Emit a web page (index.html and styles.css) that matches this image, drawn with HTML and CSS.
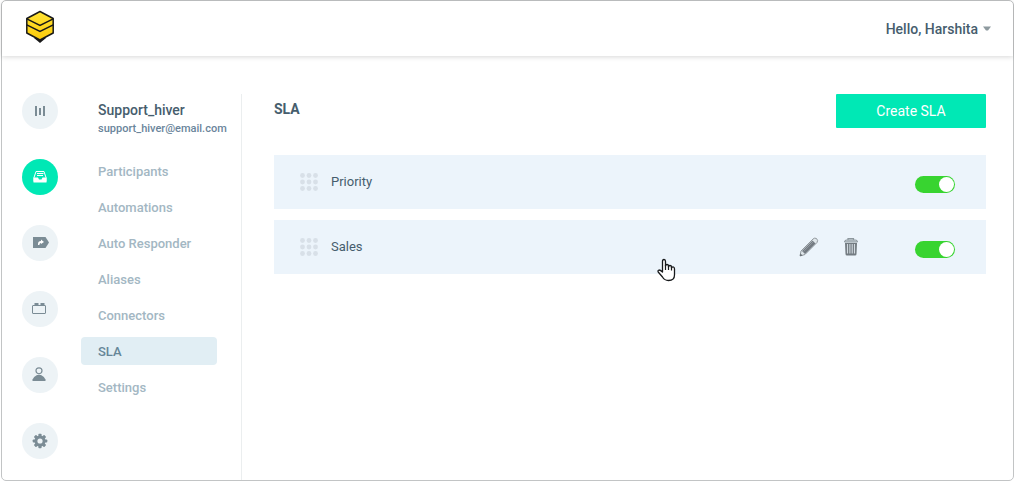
FILE: index.html
```html
<!DOCTYPE html>
<html lang="en">
<head>
<meta charset="utf-8">
<meta name="viewport" content="width=device-width, initial-scale=1">
<title>SLA</title>
<link rel="stylesheet" href="styles.css">
</head>
<body>
<div class="window">
  <header class="topbar">
    <a class="brand" href="#" aria-label="Home">
      <svg width="30" height="34" viewBox="0 0 30 34">
        <defs><linearGradient id="honey" x1="0" y1="0" x2="0" y2="1"><stop offset="0" stop-color="#ffe335"/><stop offset="1" stop-color="#fccb0a"/></linearGradient></defs>
        <path d="M9 28 L21 28 L15 33 Z" fill="#191919"/>
        <path d="M15 1.5 L28.2 8.5 V23 L15 30 L1.8 23 V8.5 Z" fill="url(#honey)" stroke="#191919" stroke-width="1.5" stroke-linejoin="round"/>
        <path d="M1.8 8.8 L15 15.5 L28.2 8.8 M1.8 14.8 L15 21.5 L28.2 14.8" fill="none" stroke="#191919" stroke-width="1.5"/>
      </svg>
    </a>
    <button class="account" type="button">Hello, Harshita
      <svg width="8" height="5" viewBox="0 0 8 5"><path d="M0 0.5 H8 L5 4.5 H3 Z" fill="#8e9a9f"/></svg>
    </button>
  </header>
  <div class="body">
    <nav class="rail" aria-label="Sections">
      <a class="rail-link" href="#" aria-label="Reports">
        <svg width="16" height="16" viewBox="0 0 16 16" fill="#7b8c95"><path d="M3 3h2v10H3zM7 5h2v7H7zM11 3h2v10h-2z"/></svg>
      </a>
      <a class="rail-link rail-link-active" href="#" aria-label="Shared inboxes">
        <svg width="16" height="16" viewBox="0 0 16 16" fill="none"><path d="M4 2.500H12L14 8.500V12.500H2V8.500Z" stroke="#fff"/><path d="M1.500 8.500H6L7 10.500H9.500L10.500 8.500H14.500V13.500H1.500Z" fill="#fff"/><path d="M5 4.500H11.500M5 6.500H11" stroke="#fff"/></svg>
      </a>
      <a class="rail-link" href="#" aria-label="Tags">
        <svg width="18" height="16" viewBox="0 0 18 16"><path d="M2 2H14.500L18 7.500L14.500 13H2Z" fill="#7b8c95"/><path d="M7 10V9Q7 6 10 6V4.500L13 7L10 9V8Q8.500 8 8.300 10Z" fill="#fff"/></svg>
      </a>
      <a class="rail-link" href="#" aria-label="Integrations">
        <svg width="16" height="16" viewBox="0 0 16 16"><path d="M2.500 2h4v2h-4zM8.500 2h4v2h-4z" fill="#7b8c95"/><rect x=".5" y="4.500" width="13" height="8" rx=".5" fill="none" stroke="#7b8c95"/></svg>
      </a>
      <a class="rail-link" href="#" aria-label="Users">
        <svg width="16" height="16" viewBox="0 0 16 16"><circle cx="7" cy="3.800" r="3" fill="none" stroke="#7b8c95" stroke-width="1.200"/><path d="M.5 14V12.500Q1.500 9.500 5 8H9Q12.500 9.500 13.500 12.500V14Z" fill="#7b8c95"/></svg>
      </a>
      <a class="rail-link" href="#" aria-label="Settings">
        <svg width="16" height="16" viewBox="-8 -8 16 16"><g fill="#7b8c95"><circle r="5.500"/><g id="teeth"><rect x="-1.600" y="-7.300" width="3.200" height="14.600" rx=".8"/><rect x="-7.300" y="-1.600" width="14.600" height="3.200" rx=".8"/></g><use href="#teeth" transform="rotate(45)"/></g><circle r="2.600" fill="#edf3f6"/></svg>
      </a>
    </nav>
    <aside class="sidebar">
      <h2 class="inbox-name">Support_hiver</h2>
      <p class="inbox-email">support_hiver@email.com</p>
      <nav class="menu" aria-label="Inbox settings">
        <a class="menu-link" href="#">Participants</a>
        <a class="menu-link" href="#">Automations</a>
        <a class="menu-link" href="#">Auto Responder</a>
        <a class="menu-link" href="#">Aliases</a>
        <a class="menu-link" href="#">Connectors</a>
        <a class="menu-link menu-link-active" href="#" aria-current="page">SLA</a>
        <a class="menu-link" href="#">Settings</a>
      </nav>
    </aside>
    <main class="content">
      <div class="content-head">
        <h1 class="title">SLA</h1>
        <button class="create" type="button">Create SLA</button>
      </div>
      <ul class="rules">
        <li class="rule">
          <svg class="grip" width="18" height="18" viewBox="0 0 18 18" fill="#d8e0e8"><g id="dots"><circle cx="2.500" cy="2.500" r="2.400"/><circle cx="9" cy="2.500" r="2.400"/><circle cx="15.500" cy="2.500" r="2.400"/></g><use href="#dots" y="6.500"/><use href="#dots" y="13"/></svg>
          <label class="rule-name" for="priority">Priority</label>
          <input class="toggle" id="priority" type="checkbox" role="switch" checked>
        </li>
        <li class="rule">
          <svg class="grip" width="18" height="18" viewBox="0 0 18 18" fill="#d8e0e8"><use href="#dots"/><use href="#dots" y="6.500"/><use href="#dots" y="13"/></svg>
          <label class="rule-name" for="sales">Sales</label>
          <div class="actions">
            <button class="action" type="button" aria-label="Edit">
              <svg width="20" height="20" viewBox="0 0 20 20"><path d="M1 19L2 14L14 2Q15.500 .500 17.500 1.500Q19.500 3.500 18 5.500L6 17.500Z" fill="#dfe6ea" stroke="#92999e"/><path d="M3 14L13.500 3.500L16.500 6.500L6 17Z" fill="#747b82"/><path d="M4.500 14.500L14 5" stroke="#a5acb1" stroke-width=".6"/><path d="M1 19L1.500 16.500L3.500 18.500Z" fill="#60676d"/></svg>
            </button>
            <button class="action" type="button" aria-label="Delete">
              <svg width="16" height="20" viewBox="0 0 16 20"><path d="M5 3V1.700H10.500V3" fill="none" stroke="#8d979d" stroke-width="1.200"/><path d="M1.500 5Q1.500 3 3.500 3H12.500Q14.500 3 14.500 5Z" fill="#c5cfd5" stroke="#8d979d"/><path d="M2 6H14L13.500 17Q13.500 18.500 12 18.500H4Q2.500 18.500 2.500 17Z" fill="#737b81"/><path d="M4.500 7V16.500M6.900 7V16.500M9.200 7V16.500M11.500 7V16.500" stroke="#d2dae0" stroke-width="1.100"/></svg>
            </button>
          </div>
          <input class="toggle" id="sales" type="checkbox" role="switch" checked>
          <svg class="pointer" width="22" height="26" viewBox="0 0 22 26" aria-hidden="true"><path d="M5.500 14V3.500Q5.500 1.500 7 1.500Q8.500 1.500 8.500 3.500V8Q8.500 6.500 10 6.500Q11.500 6.500 11.500 8V9Q11.500 7.500 13 7.500Q14.500 7.500 14.500 9V10Q15 8.500 16.500 9Q17.500 9.500 17.500 11V17Q17.500 22.500 11.500 22.500Q7.500 22.500 5.500 19L1.200 14Q.500 12.500 2 12Q3.500 12 5.500 14Z" fill="#fff" stroke="#17191b" stroke-width="1.300" stroke-linejoin="round"/><path d="M8.500 7V12M11.500 8V12M14.500 9V12.500" stroke="#17191b" stroke-width="1.200"/></svg>
        </li>
      </ul>
    </main>
  </div>
</div>
</body>
</html>
```
FILE: styles.css
```css
* { box-sizing: border-box; }
body {
  margin: 0;
  padding: 0 0 1px 1px;
  background: #fff;
  color: #465d6d;
  font: 400 13px/18px Roboto, "Liberation Sans", sans-serif;
}
h1, h2, p, ul { margin: 0; padding: 0; }
a { text-decoration: none; }
svg { display: block; flex: none; }
button { border: 0; padding: 0; background: none; font: inherit; color: inherit; cursor: pointer; }

.window {
  display: flex;
  flex-direction: column;
  min-height: calc(100vh - 1px);
  border: 1px solid #c2c4c5;
  border-radius: 5px;
}
.topbar {
  display: flex;
  align-items: center;
  justify-content: space-between;
  height: 55px;
  padding: 0 22px 0 23px;
  box-shadow: 0 1px 5px rgba(0, 0, 0, 0.16);
  border-radius: 4px 4px 0 0;
}
.brand { padding-bottom: 4px; }
.account {
  display: flex;
  align-items: center;
  gap: 5px;
  font-size: 14px;
  font-weight: 500;
}

.body { display: flex; flex: 1; padding-top: 37px; }
.rail {
  display: flex;
  flex-direction: column;
  gap: 30px;
  padding: 0 23px 0 20px;
}
.rail-link {
  display: flex;
  align-items: center;
  justify-content: center;
  width: 36px;
  height: 36px;
  border-radius: 50%;
  background: #edf3f6;
}
.rail-link-active { background: #00e8b5; }

.sidebar {
  width: 161px;
  flex: none;
  margin-top: 1px;
  padding-top: 7px;
  border-right: 1px solid #ebeeef;
}
.inbox-name { padding-left: 17px; font-size: 14px; font-weight: 500; line-height: 18px; }
.inbox-email { padding: 1px 0 0 17px; font-size: 11px; font-weight: 500; color: #6a859b; }
.menu {
  display: flex;
  flex-direction: column;
  gap: 8px;
  margin: 19px 24px 0 0;
}
.menu-link {
  padding: 2px 17px 0;
  border-radius: 4px;
  line-height: 26px;
  font-weight: 500;
  color: #a3b7c3;
}
.menu-link-active { background: #e1eef4; color: #658698; }

.content { flex: 1; padding: 1px 27px 24px 32px; }
.content-head {
  display: flex;
  align-items: flex-start;
  justify-content: space-between;
}
.title { padding-top: 6px; font-size: 14px; font-weight: 700; line-height: 18px; }
.create {
  width: 150px;
  height: 34px;
  border-radius: 1px;
  background: #00e8b5;
  color: #fff;
  font-size: 14px;
}
.rules {
  display: flex;
  flex-direction: column;
  gap: 11px;
  margin-top: 27px;
  list-style: none;
}
.rule {
  position: relative;
  display: flex;
  align-items: center;
  height: 54px;
  padding: 0 31px 1px 26px;
  background: #ecf4fb;
}
.rule-name { margin-right: auto; padding-left: 13px; }
.actions { display: flex; gap: 24px; margin-right: 56px; }
.toggle {
  appearance: none;
  display: flex;
  justify-content: flex-end;
  width: 40px;
  height: 17px;
  margin: 6px 0 0;
  padding: 1px;
  border-radius: 9px;
  background: #38d430;
}
.toggle::before {
  content: "";
  width: 15px;
  height: 15px;
  border-radius: 50%;
  background: #fff;
}
.toggle:not(:checked) { justify-content: flex-start; background: #b9c3ca; }
.pointer { position: absolute; top: 38px; left: 383px; }
```
